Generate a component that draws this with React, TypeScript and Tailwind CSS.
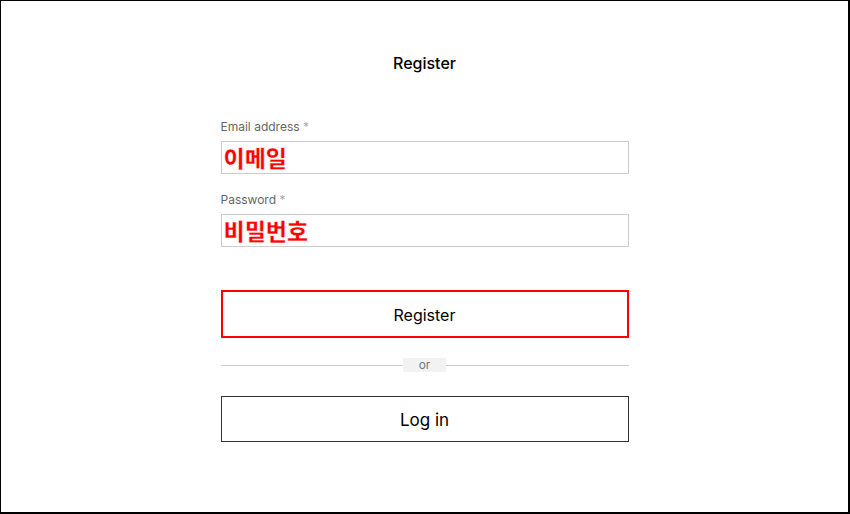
export default function App() {
  return (
    <div className="h-[514px] w-[850px] border-t border-l border-r-2 border-b-2 border-black bg-white font-['Inter','Noto_Sans',sans-serif] text-black">
      <div className="mx-auto flex w-[408px] flex-col pt-[52px]">
        <h1 className="text-center text-[16px] leading-[20px] font-medium">Register</h1>

        <label className="mt-[46px] text-[12px] leading-[16px] text-[#666]">
          Email address <span className="text-[#aaa]">*</span>
        </label>
        <div className="mt-[6px] flex h-[33px] items-center border border-[#ccc] px-[2px]">
          <span className="font-['Noto_Sans_CJK_KR',sans-serif] text-[23px] leading-none font-black text-[#f00] [-webkit-text-stroke:0.5px_#fff]">
            이메일
          </span>
        </div>

        <label className="mt-[18px] text-[12px] leading-[16px] text-[#666]">
          Password <span className="text-[#aaa]">*</span>
        </label>
        <div className="mt-[6px] flex h-[33px] items-center border border-[#ccc] px-[2px]">
          <span className="font-['Noto_Sans_CJK_KR',sans-serif] text-[23px] leading-none font-black text-[#f00] [-webkit-text-stroke:0.5px_#fff]">
            비밀번호
          </span>
        </div>

        <button className="mt-[43px] flex h-[48px] items-center justify-center border-2 border-[#f00] pt-[2px] text-[16px]">
          Register
        </button>

        <div className="mt-[20px] flex items-center">
          <div className="h-px flex-1 bg-[#ccc]" />
          <span className="bg-[#f2f2f2] px-[16px] text-[12px] leading-[14px] text-[#777]">or</span>
          <div className="h-px flex-1 bg-[#ccc]" />
        </div>

        <button className="mt-[24px] flex h-[46px] items-center justify-center border border-[#333] pt-[3px] text-[17px]">
          Log in
        </button>
      </div>
    </div>
  )
}
